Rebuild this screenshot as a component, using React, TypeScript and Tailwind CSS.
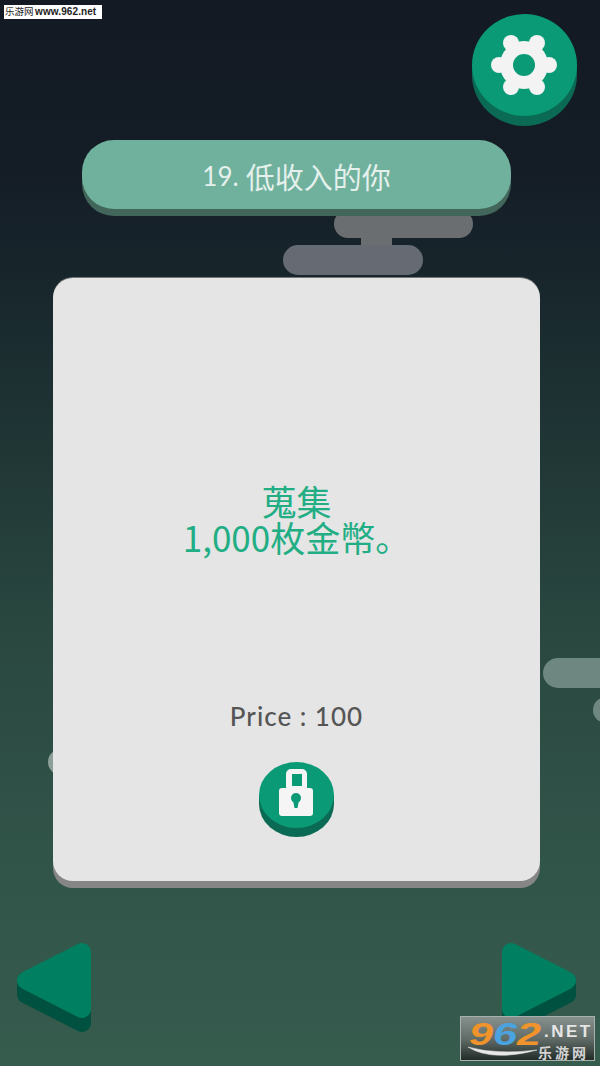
export default function App() {
  return (
    <div className="relative w-[600px] h-[1066px] overflow-hidden flex flex-col bg-[linear-gradient(to_bottom,#131a24_0%,#141c26_15%,#17252b_25%,#1f3434_40%,#2a4840_60%,#315449_80%,#365c4e_100%)] font-['Noto_Sans_CJK_SC','Noto_Sans_CJK_TC',sans-serif]">
      {/* background clouds */}
      <div className="absolute left-[283px] top-[210px] w-[190px] flex flex-col items-center">
        <div className="self-end w-[139px] h-[28px] rounded-[14px] bg-[#6a6e70]" />
        <div className="w-[31px] h-[8px] -ml-[3px] bg-[#6a6e70]" />
        <div className="self-start w-[140px] h-[30px] rounded-[15px] bg-[#666a72] -mt-[1px]" />
      </div>
      <div className="absolute left-[543px] top-[658px] w-[80px] h-[30px] rounded-[15px] bg-[#6f8781]" />
      <div className="absolute left-[593px] top-[697px] w-[60px] h-[26px] rounded-[13px] bg-[#6f8781]" />
      <div className="absolute left-[48px] top-[749px] w-[40px] h-[26px] rounded-[13px] bg-[#8d9f99]" />

      {/* watermark */}
      <div className="absolute left-[4px] top-[5px] w-[98px] h-[14px] bg-white flex items-center pl-[1px] text-[#222] text-[10px] leading-[14px] whitespace-nowrap font-['Liberation_Sans','Noto_Sans_CJK_SC',sans-serif]">
        <span className="w-[28px] text-[9.5px]">乐游网</span>
        <span className="ml-[2px] font-bold text-[10px] tracking-[0.1px]">www.962.net</span>
      </div>

      {/* top row */}
      <div className="relative flex justify-end pt-[14px] pr-[23px]">
        <div className="w-[105px] h-[112px]">
          <svg width="105" height="112" viewBox="0 0 105 112">
            <ellipse cx="52.5" cy="61" rx="52.5" ry="51" fill="#0b6a53" />
            <rect x="0" y="51" width="105" height="10" fill="#0b6a53" />
            <ellipse cx="52.5" cy="51" rx="52.5" ry="51" fill="#0a9a76" />
            <g fill="#f3f3f3">
              <circle cx="52" cy="51" r="24" />
              <circle cx="27" cy="51" r="8" />
              <circle cx="77" cy="51" r="8" />
              <circle cx="39" cy="29" r="8" />
              <circle cx="65" cy="29" r="8" />
              <circle cx="39" cy="73" r="8" />
              <circle cx="65" cy="73" r="8" />
            </g>
            <circle cx="52" cy="51" r="11" fill="#0a9a76" />
          </svg>
        </div>
      </div>

      {/* title */}
      <div className="relative mt-[14px] ml-[82px] w-[429px] h-[69px] rounded-[32px] bg-[#70b19d] shadow-[0_7px_0_#426659] flex items-center justify-center text-[#e4f0ec] text-[29px] leading-[40px] pt-[2px] whitespace-nowrap">
        <span className="font-['Lato',sans-serif] text-[26px] mr-[7px]">19.</span>
        <span>低收入的你</span>
      </div>

      {/* card */}
      <div className="relative mt-[69px] ml-[53px] w-[487px] h-[603px] rounded-[20px] bg-[#e5e5e5] shadow-[0_7px_0_#868686,0_-1px_0_#777777] flex flex-col items-center">
        <div className="mt-[205px] text-center text-[#22ae84] text-[35px] leading-[36px]">
          <div>蒐集</div>
          <div className="whitespace-nowrap">1,000枚金幣。</div>
        </div>
        <div className="mt-[145px] text-[#555555] text-[26px] leading-[32px] tracking-[1px] font-medium font-['Lato',sans-serif]">Price : 100</div>
        <div className="mt-[30px] w-[75px] h-[75px]">
          <svg width="75" height="75" viewBox="0 0 75 75">
            <ellipse cx="37.5" cy="42" rx="37.5" ry="33" fill="#0b6a53" />
            <rect x="0" y="33" width="75" height="9" fill="#0b6a53" />
            <ellipse cx="37.5" cy="33" rx="37.5" ry="33" fill="#0a9a76" />
            <path fillRule="evenodd" fill="#f5f5f5" d="M27 26 V12 a5 5 0 0 1 5 -5 H43 a5 5 0 0 1 5 5 V26 H51 a3 3 0 0 1 3 3 V51 a3 3 0 0 1 -3 3 H23 a3 3 0 0 1 -3 -3 V29 a3 3 0 0 1 3 -3 Z M33 12 V24 H43 V12 Z" />
            <circle cx="37" cy="36" r="5" fill="#0a9a76" />
            <path d="M34 38 H40 L38.5 46 H35.5 Z" fill="#0a9a76" />
          </svg>
        </div>
      </div>

      {/* arrows */}
      <div className="relative mt-[61px] pl-[16px] pr-[23px] flex justify-between">
        <svg width="77" height="92" viewBox="0 0 77 92">
          <path d="M10 38.5 V52.5 L66 81 V67 Z" fill="#00513f" stroke="#00513f" strokeWidth="18" strokeLinejoin="round" />
          <path d="M10 38.5 L66 10 V67 Z" fill="#008060" stroke="#008060" strokeWidth="18" strokeLinejoin="round" />
        </svg>
        <svg width="77" height="92" viewBox="0 0 77 92">
          <path d="M67 38.5 V52.5 L11 81 V67 Z" fill="#00513f" stroke="#00513f" strokeWidth="18" strokeLinejoin="round" />
          <path d="M67 38.5 L11 10 V67 Z" fill="#008060" stroke="#008060" strokeWidth="18" strokeLinejoin="round" />
        </svg>
      </div>

      {/* corner logo */}
      <div className="absolute left-[460px] top-[1016px] w-[135px] h-[45px] border border-[#a7b0ac] bg-[linear-gradient(to_bottom,#86918d_0%,#626d69_50%,#222c29_100%)] whitespace-nowrap flex pl-[8px] pt-[2px] font-['Liberation_Sans',sans-serif]">
        <div className="w-[76px] origin-left scale-x-[1.35] text-[32px] leading-[30px] font-bold italic">
          <span className="text-[#f0932b]">9</span>
          <span className="text-[#4aa3df]">6</span>
          <span className="text-[#f0932b]">2</span>
        </div>
        <div className="flex flex-col -ml-[1px]">
          <div className="text-[#e6e6e6] text-[17px] leading-[22px] pt-[2px] font-bold tracking-[2.5px]">.NET</div>
          <div className="text-[#d4d4d4] text-[14px] leading-[18px] tracking-[3px] font-bold -ml-[6px] font-['Noto_Sans_CJK_SC',sans-serif]">乐游网</div>
        </div>
        <svg className="absolute left-[6px] top-[29px]" width="74" height="14" viewBox="0 0 74 14">
          <path d="M1 1 Q25 16 70 4 Q30 9 1 1 Z" fill="#e8e8e8" stroke="#e8e8e8" strokeWidth="0.5" />
        </svg>
      </div>
    </div>
  );
}
